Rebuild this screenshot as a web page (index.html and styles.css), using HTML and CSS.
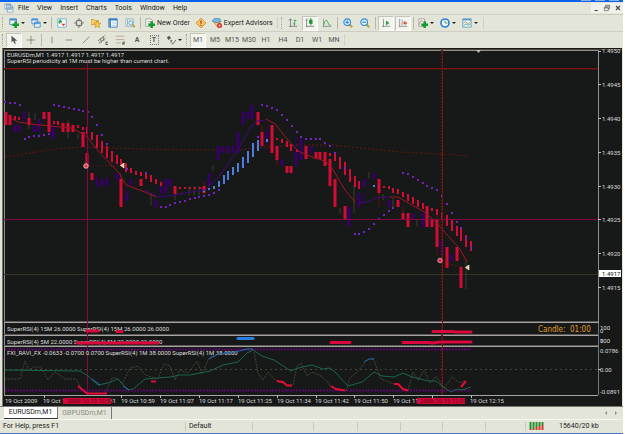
FILE: index.html
```html
<!DOCTYPE html>
<html lang="en">
<head>
<meta charset="utf-8">
<title>EURUSDm,M1</title>
<link rel="stylesheet" href="styles.css">
</head>
<body>
<div class="app">
<div class="titlebar"><i></i><i></i><i></i></div>
<nav class="menu">
  <svg class="ic" viewBox="0 0 12 12"><path d="M1 1h7v6H1zM3 3h7v5H3zM4 5h7v6H4z" fill="#f4f8fa" stroke="#83a9c0"/><path d="M2 2h6M5 6h5" stroke="#5b93c5"/></svg>
  <button>File</button><button>View</button><button>Insert</button><button>Charts</button><button>Tools</button><button>Window</button><button>Help</button>
  <span class="wins"><button aria-label="Minimize">_</button><button aria-label="Restore"><svg class="ic" viewBox="0 0 12 12"><path d="M4 5V2h6v5H8M2 5h6v5H2zM4 3h6M2 6h6" fill="none" stroke="#555"/></svg></button><button aria-label="Close"><svg class="ic" viewBox="0 0 12 12"><path d="M3 3l6 6M9 3l-6 6" stroke="#444" stroke-width="1.6"/></svg></button></span>
</nav>
<div class="bar">
  <i class="grip"></i>
  <button class="wide" aria-label="New chart"><svg class="ic" viewBox="0 0 12 12"><path d="M1 1h8v7H1z" fill="#eef6fa" stroke="#4c86b8"/><path d="M1 2h8" stroke="#4488cc" stroke-width="2"/><path d="M8 4v8M4 8h8" stroke="#139b2b" stroke-width="3"/></svg><b class="dd"></b></button>
  <button class="wide" aria-label="Profiles"><svg class="ic" viewBox="0 0 12 12"><path d="M1 1h7v6H1zM4 5h7v6H4z" fill="#eaf5fc" stroke="#4584bd"/><path d="M1 2h7M4 6h7" stroke="#4c95d9" stroke-width="2"/></svg><b class="dd"></b></button>
  <i class="sep"></i>
  <button aria-label="Market watch"><svg class="ic" viewBox="0 0 12 12"><path d="M1 1h10v10H1z" fill="#fff" stroke="#64a5d0"/><path d="M2 5l2-3 2 3zM3 5v2" fill="#17a043" stroke="#17a043"/><path d="M5 7h5l-2 3z" fill="#e44428"/></svg></button>
  <button aria-label="Data window"><svg class="ic" viewBox="0 0 12 12"><circle cx="6" cy="6" r="3.5" fill="none" stroke="#777" stroke-width="1.4"/><path d="M6 0v4M6 8v4M0 6h4M8 6h4" stroke="#777"/></svg></button>
  <button aria-label="Navigator"><svg class="ic" viewBox="0 0 12 12"><path d="M0 2h4l1 1h4v5H0z" fill="#f6d16c" stroke="#c79836"/><path d="M7 3l1.5 3 3.5.3-2.5 2 1 3.4L7.500 10 5 11.700l.8-3.400L3.500 6l3-.3z" fill="#ffc94a" stroke="#c08c26" stroke-width=".7"/></svg></button>
  <button aria-label="Terminal"><svg class="ic" viewBox="0 0 12 12"><path d="M1 1h10v10H1z" fill="#fff" stroke="#2d72b7"/><path d="M1 2h10M2.500 1v10" stroke="#3781c5" stroke-width="2"/><path d="M5 5h5M5 7h5M5 9h5" stroke="#b6cbd8"/></svg></button>
  <button aria-label="Strategy tester"><svg class="ic" viewBox="0 0 12 12"><path d="M1 1h9v9H1z" fill="#e9f3f5" stroke="#8fb3c6"/><path d="M3 2v7M6 2v7" stroke="#93a89c"/><circle cx="7" cy="6" r="2.500" fill="#d4edfb" stroke="#6fa0be"/><path d="M9 8l3 3" stroke="#c79836" stroke-width="2"/></svg></button>
  <i class="sep"></i>
  <button class="label"><svg class="ic" viewBox="0 0 12 12"><path d="M1 1h6l2 2v7H1z" fill="#fafcff" stroke="#899"/><path d="M3 4h4M3 6h3" stroke="#aaa"/><path d="M8 4v8M4 8h8" stroke="#139b2b" stroke-width="3"/></svg>New Order</button>
  <button aria-label="MetaEditor"><svg class="ic" viewBox="0 0 12 12"><path d="M6 0l6 6-6 6-6-6z" fill="#f9c468" stroke="#d98f2d"/><path d="M6 3v4M6 8v1.500" stroke="#964d12" stroke-width="1.500"/></svg></button>
  <button class="label experts"><svg class="ic" viewBox="0 0 12 12"><path d="M2 5h8l-3 6z" fill="#f3ce65" stroke="#c4963d"/><path d="M0 4q2-4 6-4t5 4q-5 3-11 0" fill="#79b6e1" stroke="#5790b8"/><circle cx="9" cy="9" r="3" fill="#dc2427"/><path d="M8 8h2v2H8z" fill="#fff"/></svg>Expert Advisors</button>
  <i class="sep end"></i><i class="grip"></i>
  <button aria-label="Bar chart"><svg class="ic" viewBox="0 0 12 12"><path d="M3 1v10M1 10h10M1 3l2-2 2 2" fill="none" stroke="#777"/><path d="M8 2v7M6 7h2M8 3h2" stroke="#28a13f"/></svg></button>
  <button class="on" aria-label="Candlesticks"><svg class="ic" viewBox="0 0 12 12"><path d="M2 1v10M1 10h10M1 3l2-2" fill="none" stroke="#777"/><path d="M7 0v9" stroke="#179433"/><path d="M5 2h4v5H5z" fill="#179433"/></svg></button>
  <button aria-label="Line chart"><svg class="ic" viewBox="0 0 12 12"><path d="M2 1v10M1 10h10" stroke="#888"/><path d="M2 8q3-9 5-3t4 3" fill="none" stroke="#35aa4c"/></svg></button>
  <i class="sep"></i>
  <button aria-label="Zoom in"><svg class="ic" viewBox="0 0 12 12"><path d="M7 7l4 4" stroke="#cfa12f" stroke-width="2.500"/><circle cx="5" cy="5" r="4" fill="#d8f0ff" stroke="#3289d5" stroke-width="1.300"/><path d="M5 3v4M3 5h4" stroke="#2577c9" stroke-width="1.300"/></svg></button>
  <button aria-label="Zoom out"><svg class="ic" viewBox="0 0 12 12"><path d="M7 7l4 4" stroke="#cfa12f" stroke-width="2.500"/><circle cx="5" cy="5" r="4" fill="#d8f0ff" stroke="#3289d5" stroke-width="1.300"/><path d="M3 5h4" stroke="#2577c9" stroke-width="1.300"/></svg></button>
  <i class="sep"></i>
  <button class="on" aria-label="Auto scroll"><svg class="ic" viewBox="0 0 12 12"><path d="M3 1v10M1 10h10" stroke="#888"/><path d="M6 3l4 3-4 3z" fill="#25a044"/></svg></button>
  <button class="on" aria-label="Chart shift"><svg class="ic" viewBox="0 0 12 12"><path d="M2 1v10M1 10h10M5 2v7" stroke="#888"/><path d="M11 6H7M9 4L7 6l2 2" fill="none" stroke="#d4573d" stroke-width="1.500"/></svg></button>
  <i class="sep"></i>
  <button class="wide" aria-label="Indicators"><svg class="ic" viewBox="0 0 12 12"><path d="M1 1h7v9H1z" fill="#f7faf8" stroke="#99a"/><path d="M2 8q1-7 4-4" fill="none" stroke="#b76"/><path d="M8 4v8M4 8h8" stroke="#139b2b" stroke-width="3"/></svg><b class="dd"></b></button>
  <button class="wide" aria-label="Periods"><svg class="ic" viewBox="0 0 12 12"><circle cx="6" cy="6" r="4.800" fill="#f0faff" stroke="#2c7fd2" stroke-width="2"/><path d="M6 3v3h3" fill="none" stroke="#476"/></svg><b class="dd"></b></button>
  <button class="wide" aria-label="Templates"><svg class="ic" viewBox="0 0 12 12"><path d="M1 1h10v10H1z" fill="#eff7ef" stroke="#5e98ba"/><path d="M1 2h10" stroke="#5c9ccc" stroke-width="2"/><path d="M2 6q3-3 4 0t4-1" fill="none" stroke="#a85"/><path d="M2 9q3-3 4-1t4-1" fill="none" stroke="#4a9"/></svg><b class="dd"></b></button>
  <i class="sep end"></i>
</div>
<div class="bar lines">
  <i class="grip"></i>
  <button class="on" aria-label="Cursor"><svg class="ic" viewBox="0 0 12 12"><path d="M3 1v8l2-2 2 4 1-1-1-3h3z" fill="#555"/></svg></button>
  <button aria-label="Crosshair"><svg class="ic" viewBox="0 0 12 12"><path d="M6 1v10M1 6h10" stroke="#8d7c6c"/></svg></button>
  <i class="sep"></i>
  <button aria-label="Vertical line"><svg class="ic" viewBox="0 0 12 12"><path d="M6 2v8" stroke="#88776a"/></svg></button>
  <button aria-label="Horizontal line"><svg class="ic" viewBox="0 0 12 12"><path d="M2 6h8" stroke="#88776a"/></svg></button>
  <button aria-label="Trendline"><svg class="ic" viewBox="0 0 12 12"><path d="M2 10l8-8" stroke="#88776a"/></svg></button>
  <button aria-label="Channel"><svg class="ic" viewBox="0 0 12 12"><path d="M0 7l8-6M1 10l8-6M3 4l1 5M6 2l1 5" stroke="#665"/><path d="M12 8.500H9.500v3H12" fill="none" stroke="#444"/></svg></button>
  <button aria-label="Fibonacci"><svg class="ic" viewBox="0 0 12 12"><path d="M1 1.500h10M1 5.500h10M1 9.500h6" stroke="#b39f87"/><path d="M9.500 12V8.500H12M9.500 10.500H12" fill="none" stroke="#444"/></svg></button>
  <button class="tx" aria-label="Text">A</button>
  <button class="tx" aria-label="Text label"><span class="boxed">T</span></button>
  <button class="wide" aria-label="Arrows"><svg class="ic" viewBox="0 0 12 12"><path d="M1 3l3-2 2 3-3 2zM5 6l3 1-2 2z" fill="#555"/><path d="M6 9l2 2 4-5" fill="none" stroke="#555"/></svg><b class="dd"></b></button>
  <i class="grip"></i>
  <button class="tf on">M1</button><button class="tf">M5</button><button class="tf">M15</button><button class="tf">M30</button><button class="tf">H1</button><button class="tf">H4</button><button class="tf">D1</button><button class="tf">W1</button><button class="tf">MN</button>
  <i class="sep end"></i>
</div>
<main class="chart">
<svg class="plot" viewBox="2 48 620 358" role="img" aria-label="EURUSDm,M1 chart">
  <rect x="2" y="48" width="620" height="358" fill="#171918"/>
  <path d="M2 49.500H622" stroke="#514536"/><path d="M2.500 48V406" stroke="#777"/>
  <g fill="none" stroke="#a09c9a">
    <path d="M4.500 395V50.500H598.500V323" stroke="#8e8e8e"/>
    <path d="M4 321.500H598M4 334.500H598M4 345.500H598" stroke="#5b5856"/>
    <path d="M4 322.500H598M4 335.500H598M4 346.500H598M4 395.500H598" stroke="#a7a5a3"/>
    <path d="M598.500 323V395" stroke="#71797a"/>
    <path d="M598 51.500h3M598 84.500h3M598 118.500h3M598 152.500h3M598 186.500h3M598 219.500h3M598 253.500h3M598 287.500h3M598 369.500h3M44.500 395v3M121.500 395v3M160.500 395v3M199.500 395v3M238.500 395v3M277.500 395v3M316.500 395v3M354.500 395v3M393.500 395v3M432.500 395v3M471.500 395v3" stroke="#bbb"/>
  </g>
  <path d="M476 50h5l-2.500 3z" fill="#b8bbb9"/>
  <path d="M4 68.500H598" stroke="#7c1512"/><path d="M4 69.500H598" stroke="#641510" stroke-dasharray="1 1"/>
  <path d="M4 274.500H598" stroke="#343823"/>
  <path class="ma2" d="M5 157L30 153L55 149L80 147L140 149L190 150L240 150L262 147L300 145L330 145L360 148L400 152L442 154L468 156"/>
  <path class="trade" d="M87 166H122M441 262L467 268"/>

  <path class="wick dark" d="M29 112v17M35 113v7M68 120v18M78 134v5M151 193v12M175 186v14M189 186v9M194 186v9M199 186v9M213 165v6M340 208v6M354 185v28M369 172v7M383 194v6M393 198v10M417 219v8M466 261v28"/>
  <path class="wick redw" d="M121 173v8M262 125v8M277 153v13M379 190v17M403 207v8M437 209v46M204 182v12"/>
  <path class="wick vio" d="M24 108v15M97 176v13M107 176v12M126 188v16M267 127v18M296 136v18M364 194v8"/>
  <path class="body vio" d="M15 125v7M19 125v7M24 112v7M34 125v7M39 119v13M53 125v14M97 179v7M102 179v7M107 179v7M117 173v7M127 193v7M131 179v7M156 200v7M161 186v8M166 179v14M170 179v7M209 173v13M218 146v14M223 146v7M228 146v7M233 146v7M238 132v21M243 112v13M248 112v7M252 105v14M267 132v7M282 159v7M296 151v15M301 139v21M311 146v7M349 207v20M359 193v14M364 179v8M374 173v6M389 200v7M413 213v7M423 213v14M442 240v14M451 254v7"/>
  <path class="body red" d="M6 112v13M10 115v10M29 118v7M44 112v7M49 112v20M63 123v9M68 123v9M73 125v7M83 132v15M87 153v13M92 173v7M121 179v28M141 179v7M175 186v8M204 186v7M258 112v13M262 132v14M272 125v28M277 146v14M287 166v7M291 166v7M306 146v13M316 152v7M320 152v7M325 152v14M330 159v27M335 179v28M345 206v14M379 179v14M398 200v7M403 213v7M408 213v14M427 206v21M432 219v8M437 219v28M447 247v21M457 247v14M461 267v21"/>
  <path class="step red" d="M15 116v4M19 117v3M54 121v3M58 121v4M78 125v3M83 127v3M87 127v7M92 132v8M97 135v13M102 141v12M107 146v12M112 151v11M117 155v9M121 159v7M126 163v9M131 168v5M136 171v4M141 172v4M146 172v7M151 175v7M156 179v5M161 182v4M180 187v2M185 187v2M190 187v2M195 187v2M200 187v2M277 138v2M282 139v4M287 141v6M291 144v7M297 149v3M330 153v3M335 153v8M340 157v12M345 162v13M350 169v13M355 176v11M359 181v8M384 186v2M389 186v3M393 188v5M398 189v5M403 192v5M408 194v7M413 197v7M418 200v7M423 203v6M432 208v3M437 209v6M442 212v7M447 215v11M452 220v11M457 226v10M461 229v12M466 235v12M471 241v10"/>
  <path class="step blue" d="M209 188v2M214 186v3M219 181v6M224 175v9M228 171v9M233 167v8M238 163v9M243 157v11M248 151v12M253 143v14M258 140v11M267 139v3M374 185v2M204 190v2"/>
  <path class="ma vio" d="M145 190L158 197L175 195L190 192L205 190L212 183L220 175L238 150L250 128L257 121L266 120M359 203L367 202L376 198L390 197"/>
  <path class="ma" d="M5 115L18 122L40 125L72 128L86 136L100 153L119 173L126 185L145 192L156 197M266 119L275 124L287 139L298 151L312 157L325 161L332 168L345 190L355 202M390 197H398L410 204L423 211L437 223L450 238L460 249L467 262"/>
  <path class="dots" d="M4 102h2M9 103h2M14 103h2M19 105h2M53 105h2M58 106h2M63 107h2M68 108h2M73 109h2M78 110h2M82 111h2M87 112h2M91 117h2M96 125h2M101 135h2M106 144h2M24 139h2M28 137h2M33 136h2M38 136h2M43 135h2M48 134h2M160 207h2M165 207h2M169 205h2M174 203h2M179 202h2M184 201h2M189 199h2M194 198h2M198 197h2M203 196h2M208 195h2M213 193h2M218 190h2M257 137h2M261 105h2M266 106h2M271 108h2M276 110h2M281 115h2M286 120h2M291 126h2M296 132h2M300 137h2M305 139h2M310 139h2M315 139h2M319 139h2M324 143h2M329 146h2M334 153h2M354 234h2M358 234h2M363 232h2M368 229h2M373 224h2M378 219h2M383 215h2M388 211h2M392 208h2M402 173h2M407 174h2M412 177h2M417 180h2M422 183h2M426 186h2M431 188h2M436 190h2M441 196h2M446 204h2M451 213h2M456 222h2M460 228h2M465 238h2M470 248h2M344 168h2M126 169h2M145 173h2"/>

  <path d="M4 219.500H598M87.500 60V395" stroke="#850844"/>
  <path d="M442.500 50V395" stroke="#731413"/><path d="M441.500 50V395" stroke="#7b1713" stroke-dasharray="1 2"/>
  <g stroke-width=".6"><circle cx="86" cy="166" r="2.300" fill="#e33b47" stroke="#fff"/><path d="M124 163v5l-3.500-2.500zM469 265v5l-3.500-2.500z" fill="#f6ce83" stroke="#fff"/><circle cx="440" cy="260.500" r="2.300" fill="#ed2447" stroke="#ddd"/></g>

  <g class="txt">
    <text x="7" y="57">EURUSDm,M1  1.4917 1.4917 1.4917 1.4917</text>
    <text x="7" y="63">SuperRSI periodicity at 1M must be higher than current chart.</text>
    <text x="7" y="331">SuperRSI(4) 15M 26.0000  SuperRSI(4) 15M 26.0000 26.0000</text>
    <text x="7" y="344">SuperRSI(4) 5M 22.0000  SuperRSI(4) 5M 22.0000 22.0000</text>
    <text x="7" y="355">FXI_RAVI_FX -0.0633 -0.0700 0.0700  SuperRSI(4) 1M 38.0000  SuperRSI(4) 1M 38.0000</text>
    <text x="602" y="53">1.4950</text><text x="602" y="87">1.4945</text><text x="602" y="121">1.4940</text><text x="602" y="155">1.4935</text><text x="602" y="189">1.4930</text><text x="602" y="222">1.4925</text><text x="602" y="256">1.4920</text><text x="602" y="290">1.4915</text>
    <text x="600" y="330">100</text><text x="600" y="333">0</text><text x="600" y="343">100</text><text x="600" y="343">0</text><text x="600" y="353">0.0786</text><text x="600" y="372">0.00</text><text x="600" y="394">-0.0891</text>
    <text x="5" y="403">19 Oct 2009</text><text x="43" y="403">19 Oct 10:43</text><text x="82" y="403">19 Oct 10:51</text><text x="121" y="403">19 Oct 10:59</text><text x="160" y="403">19 Oct 11:07</text><text x="199" y="403">19 Oct 11:17</text><text x="238" y="403">19 Oct 11:25</text><text x="277" y="403">19 Oct 11:34</text><text x="315" y="403">19 Oct 11:42</text><text x="354" y="403">19 Oct 11:50</text><text x="393" y="403">19 Oct 11:58</text><text x="470" y="403">19 Oct 12:15</text>
  </g>
  <rect x="599" y="270" width="22" height="7" fill="#fff"/><text class="txt price" x="602" y="276">1.4917</text>
  <g fill="#d8073a"><rect x="63" y="398" width="48" height="6"/><rect x="417" y="398" width="48" height="6"/></g>
  <g class="txt tag"><text x="67" y="403">2009.10.19 10:52</text><text x="420" y="403">2009.10.19 12:09</text></g>
  <text class="candle" x="538" y="332">Candle:  01:00</text>

  <g class="mark"><path d="M87 331H98M117 331.500H122M433 331.500H452L456 332H471"/><path d="M77 343H158M403 342.500H427L433 343L440 342H471M331 342.500H350"/><path d="M238 338.500H253" stroke="#2a7fe6"/></g>
  <path class="bands" d="M5 349.500H471M5 390.500H471"/>
  <path d="M5 369.500H598" stroke="#464632" stroke-dasharray="2 3"/>
  <path class="gray" d="M5 379H20L25 361L29 370L34 367H41L48 380L55 372L65 379H76L82 389M105 394L112 378H117L122 384L130 368L138 366L145 375L158 379L164 364L170 366L175 380L180 370L188 373L197 361L202 374L209 358L214 355M254 352L258 373L263 380L268 372L275 380L287 385L293 385L297 366L301 363L307 376L312 372L321 376L327 381L331 387M346 391L350 378L356 373L365 363M373 358L381 379L394 384M408 390L413 372L418 380L424 370L430 383L436 376L444 388L452 377L460 383L465 381"/>
  <path class="green" d="M5 370L80 371L88 376L98 385L108 383L118 379L128 390L133 389L145 379L158 378L170 377L180 375L190 375L200 373L210 371L223 365L238 362L247 353L253 350L262 356L274 360L291 371L298 368L312 365L323 369L330 368L336 373L348 386L362 382L374 372L382 376L394 377L403 373L412 377L429 381L436 381L443 387L451 392L457 389L462 390L471 387"/>
  <path class="azure" d="M209 359L218 354L235 352L247 349H253M364 362L369 359H374M92 379L100 385M123 386L129 390"/>
  <path class="sig" d="M78 386L87 393.500H107M151 381.500H156M277 381L283 382L287 385.500H292M331 386L336 389L345 390.500M394 384H398L403 389L408 390.500M461 387L466 381"/>
</svg>
</main>
<div class="tabs"><button class="tab active">EURUSDm,M1</button><button class="tab">GBPUSDm,M1</button><span class="scrollers"><button aria-label="Scroll left"><i class="arr left"></i></button><button aria-label="Scroll right"><i class="arr"></i></button></span></div>
<footer class="status"><span class="help">For Help, press F1</span><span class="prof">Default</span><span></span><span></span><span></span><span></span><span></span><span></span><span class="sig-icon"><svg viewBox="0 0 15 8"><path d="M1.500 0v7M4.500 0v7M7.500 0v5M10.500 0v4M13.500 0v3" stroke="#2a8d31" stroke-width="2"/><path d="M7.500 5v3M10.500 4v4M13.500 3v5M1.500 7v1M4.500 7v1" stroke="#cf3a24" stroke-width="2"/></svg></span><span class="traffic">15640/20 kb</span></footer>
<div class="desk"></div>
</div>
</body>
</html>
```
FILE: styles.css
```css
* { box-sizing: border-box; }
body { margin: 0; background: #fff; font: 7px/9px Roboto, "Liberation Sans", sans-serif; color: #222; }
button { border: 0; padding: 0; background: none; font: inherit; color: inherit; }
.app { background: #e3e5d8; margin-right: 2px; }
.titlebar { height: 2px; background: #0864ec; display: flex; justify-content: flex-end; gap: 4px; padding-right: 4px; }
.titlebar i { width: 10px; height: 1px; background: #8faeda; }
.ic { width: 10px; height: 10px; display: block; flex: none; }
.menu { height: 12px; padding-left: 4px; display: flex; align-items: center; gap: 8px; }
.menu > .ic { margin-right: -4px; }
.wins { margin-left: auto; display: flex; gap: 1px; background: #f1f1ec; }
.wins button { width: 10px; height: 10px; line-height: 6px; font-weight: bold; display: grid; place-items: center; }
.wins .ic { width: 8px; height: 8px; }
.bar { height: 17px; border-top: 1px solid #cfccc0; display: flex; align-items: center; gap: 1px; padding-left: 1px; }
.bar button { min-width: 16px; height: 15px; display: flex; align-items: center; justify-content: center; gap: 2px; flex: none; border: 1px solid transparent; }
.bar .wide { width: 21px; }
.bar .on { background: #f4f4ef; border-color: #c6c4b8 #fff #fff #c6c4b8; }
.bar .label { padding: 0 1px; }
.dd { border: 2px solid transparent; border-top-color: #222; border-bottom: 0; }
.grip { width: 2px; height: 12px; border-left: 1px dotted #a9a28c; margin: 0 1px; }
.sep { width: 1px; height: 12px; background: #bab7a9; margin: 0 1px; }
.end { background: #d2cfc6; }
.lines { color: #555; }
.tx { font-weight: bold; }
.boxed { border: 1px dotted #777; width: 9px; height: 10px; line-height: 9px; }
.chart { margin: 0 1px 0 2px; }
.plot { display: block; width: 100%; height: auto; }
.txt { font-family: Roboto, "Liberation Sans", sans-serif; font-size: 6px; fill: #dcdcda; white-space: pre; }
.price { fill: #111; }
.tag { fill: #4d0818; }
.candle { font: 8px "DejaVu Sans Condensed", "DejaVu Sans", sans-serif; fill: #e39b25; white-space: pre; }
.wick { stroke-width: 1; fill: none; }
.dark { stroke: #393e2b; }
.redw { stroke: #65150e; }
.body { stroke-width: 3; fill: none; }
.step { stroke-width: 2; fill: none; }
.red { stroke: #d20c35; }
.body.vio, .wick.vio { stroke: #360064; }
.blue { stroke: #527be0; }
.ma { fill: none; stroke: #a41424; stroke-width: 1; }
.ma.vio { stroke: #42077c; }
.ma2 { fill: none; stroke: #651712; stroke-dasharray: 2 2; }
.trade { fill: none; stroke: #80180f; stroke-dasharray: 1 2; }
.dots { stroke: #7521c4; stroke-width: 2; }
.mark { fill: none; stroke: #d9073b; stroke-width: 3; stroke-linecap: round; }
.bands { stroke: #570768; stroke-width: 2; stroke-dasharray: 2 1; }
.gray { fill: none; stroke: #404536; stroke-dasharray: 2 1; }
.green { fill: none; stroke: #19664a; }
.azure { fill: none; stroke: #286ebb; }
.sig { fill: none; stroke: #e50b37; stroke-width: 2; }
.tabs { height: 13px; border-top: 1px solid #777; display: flex; padding-left: 4px; align-items: flex-start; }
.tab { height: 12px; width: 54px; border-right: 1px solid #777; color: #8f8c82; }
.tab.active { background: #fff; color: #222; border-bottom: 1px solid #333; }
.scrollers { margin-left: auto; display: flex; padding: 2px 2px 0 0; }
.scrollers button { width: 10px; height: 8px; display: grid; place-items: center; }
.arr { border: 2px solid transparent; border-left-color: #888; border-right: 0; }
.arr.left { border-left: 0; border-right: 2px solid #888; }
.status { height: 14px; border-top: 1px solid #f7f7f2; display: grid; grid-template-columns: 185fr 67fr 61fr 44fr 43fr 42fr 43fr 40fr 31fr 67fr; align-items: center; white-space: nowrap; }
.status span { border-left: 1px solid #cbc8bd; height: 9px; padding-left: 3px; }
.status .help { border: 0; }
.status .traffic { border: 0; }
.status .sig-icon svg { width: 15px; height: 8px; display: block; }
.desk { height: 2px; background: #4479cd; }
```
